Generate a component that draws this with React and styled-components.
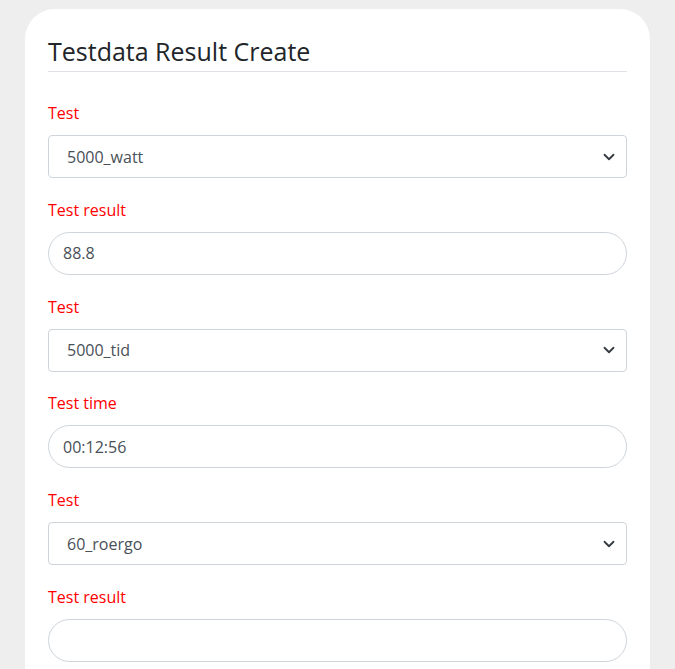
import React from "react";
import styled, { createGlobalStyle } from "styled-components";

const GlobalStyle = createGlobalStyle`
  * {
    box-sizing: border-box;
  }
  body {
    margin: 0;
    background: #eeeeee;
    font-family: "Open Sans", "Noto Sans", sans-serif;
  }
`;

const Page = styled.div`
  padding: 9px 25px 0 25px;
`;

const Card = styled.div`
  background: #fff;
  border-radius: 30px 30px 0 0;
  padding: 25px 23px 0 23px;
  height: 660px;
  overflow: hidden;
`;

const Title = styled.h2`
  margin: 0 0 29px 0;
  font-size: 25px;
  font-weight: 400;
  line-height: 34px;
  color: #212529;
  padding-bottom: 3px;
  border-bottom: 1px solid #dee2e6;
`;

const Group = styled.div`
  margin-bottom: 19.8px;
`;

const Label = styled.label`
  display: block;
  color: red;
  font-size: 16px;
  line-height: 24px;
  margin-bottom: 10px;
`;

const Select = styled.select`
  display: block;
  width: 100%;
  height: 43px;
  padding: 0 36px 0 18px;
  font-family: inherit;
  font-size: 16px;
  color: #495057;
  background-color: #fff;
  background-image: url("data:image/svg+xml,%3csvg xmlns='http://www.w3.org/2000/svg' viewBox='0 0 16 16'%3e%3cpath fill='none' stroke='%23343a40' stroke-linecap='round' stroke-linejoin='round' stroke-width='2.4' d='M2 5l6 6 6-6'/%3e%3c/svg%3e");
  background-repeat: no-repeat;
  background-position: right 9px center;
  background-size: 16px 12px;
  border: 1px solid #ced4da;
  border-radius: 4px;
  appearance: none;
`;

const Input = styled.input`
  display: block;
  width: 100%;
  height: 43px;
  padding: 0 14px;
  font-family: inherit;
  font-size: 16px;
  color: #495057;
  background: #fff;
  border: 1px solid #ced4da;
  border-radius: 22px;
  outline: none;
`;

const fields = [
  { id: 1, label: "Test", kind: "select", value: "5000_watt" },
  { id: 2, label: "Test result", kind: "input", value: "88.8" },
  { id: 3, label: "Test", kind: "select", value: "5000_tid" },
  { id: 4, label: "Test time", kind: "input", value: "00:12:56" },
  { id: 5, label: "Test", kind: "select", value: "60_roergo" },
  { id: 6, label: "Test result", kind: "input", value: "" },
];

const App = () => {
  return (
    <Page>
      <GlobalStyle />
      <Card>
        <Title>Testdata Result Create</Title>
        {fields.map((field) => (
          <Group key={field.id}>
            <Label>{field.label}</Label>
            {field.kind === "select" ? (
              <Select defaultValue={field.value}>
                <option value={field.value}>{field.value}</option>
              </Select>
            ) : (
              <Input defaultValue={field.value} />
            )}
          </Group>
        ))}
      </Card>
    </Page>
  );
};

export default App;
